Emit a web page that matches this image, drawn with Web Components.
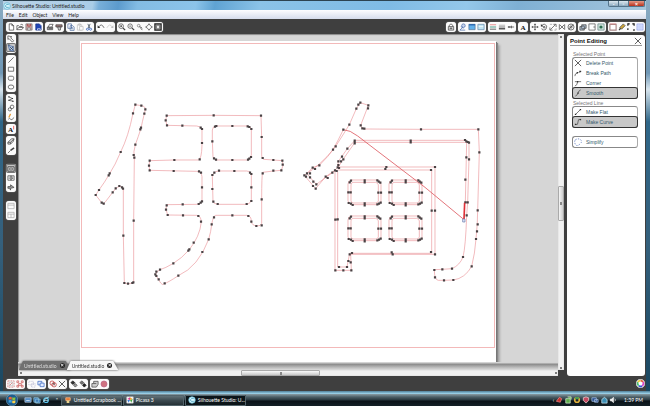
<!DOCTYPE html>
<html lang="en">
<head>
<meta charset="utf-8">
<title>Silhouette Studio: Untitled.studio</title>
<style>
html, body { margin: 0; height: 100%; }
body { font: 5px/6px Lato, "Liberation Sans", Arial, sans-serif; color: #222; overflow: hidden; }
</style>
</head>
<body>
<studio-app></studio-app>
<script>
const ICONS = {
  new: '<path class="w" d="M2.5 1h3l2 2v5h-5zM5.5 1v2h2"/>',
  open: '<path d="M1 7.500V3h2l1 1h3v1M1 7.500 3 5h5.500L6.500 7.500zM5 2q1.500-1.200 3 .5"/>',
  save: '<path fill="#c9a3a3" stroke="#777" d="M1 1h7v7H1z"/><path stroke="#a33" d="M3 1v2.500h3V1"/><path fill="#eee" stroke="#777" d="M3 5.500h3V8H3z"/>',
  saveblue: '<path fill="#2347b5" stroke="#16348c" d="M2 1h4l2 2v5H2z"/><path stroke="#fff" d="M4 6.500h3V8M4 6.500V8"/>',
  print: '<path fill="#aaa" d="M1.500 4.500h6v3h-6z"/><path class="w" d="M2.500 4.500 4 1.500h4L6.500 4.500z"/><path d="M3 6h4"/>',
  cutter: '<path fill="#977" d="M1 2h7v2.500H1z"/><path fill="#ccc" d="M3 4.500h3.500L6 8H4z"/>',
  copy: '<path class="w" stroke="#4b6a9c" d="M1 1h4v5H1zM3.500 3h3l1.500 1.500v3.800H3.500z"/><path stroke="#4b6a9c" d="M4.500 5h2M4.500 6.500h2.500"/>',
  paste: '<g opacity=".35"><path d="M1.500 2h5v6h-5zM3 1h2v1.500H3z"/><path class="w" d="M4 4h4v4H4z"/></g>',
  cut: '<path stroke="#345" d="M3.200 1 5.500 6M5.800 1 3.500 6"/><circle stroke="#2b5bb8" cx="2.800" cy="7" r="1.200"/><circle stroke="#2b5bb8" cx="6.300" cy="7" r="1.200"/>',
  undo: '<path d="M2 4.500Q5-.5 8 5.500"/><path class="k" d="M.7 2.500v3.200h3z"/>',
  redo: '<g opacity=".3"><path d="M7 4.500Q4-.5 1 5.500"/><path class="k" d="M8.300 2.500v3.200h-3z"/></g>',
  zoomin: '<circle cx="3.500" cy="3.500" r="2.600"/><circle class="k" cx="3.500" cy="3.500" r="1"/><path stroke-width="1.500" d="M5.500 5.500 8 8"/>',
  zoomout: '<circle cx="3.500" cy="3.500" r="2.500"/><path d="M2.500 3.500h2"/><path stroke-width="1.400" d="M5.500 5.500 8 8"/>',
  zoomsel: '<circle cx="3" cy="3" r="1.500" stroke="#777"/><path d="M4 4 7 8M5 4l2 2"/>',
  pan: '<path class="w" d="M4.500.8 6 3l2.300 1.500L6 6 4.500 8.200 3 6 .7 4.500 3 3z"/>',
  fit: '<path fill="#aaa" stroke="#222" stroke-width="1.400" d="M1 1h7v7H1z"/><path class="w" stroke="#555" d="M3 2.500h3v4H3z"/>',
  lock: '<path d="M2.500 4V2.500Q4.500-.5 6.500 2.500V4"/><path fill="#ddd" d="M1.500 4h6v4h-6z"/><path d="M4.500 5v2M3 6h3"/>',
  pen: '<circle cx="5" cy="3" r="2" fill="#c9d6ee" stroke="#4668a8"/><path stroke="#4668a8" d="M4 5 1 8h6M2 4l3 2"/>',
  fill: '<path fill="#62b1eb" stroke="#579" d="M1 1.500h7v6H1z"/><path stroke="#2b67ae" stroke-width="1.500" d="M1 2h7"/>',
  fillpat: '<path fill="#c2e5f2" stroke="#68a" d="M1 1.500h7v6H1z"/><path stroke="#fff" d="M2 4h5"/>',
  linecolor: '<path stroke="#d66" d="M1 2h7"/><path stroke="#6a9" stroke-width="1.300" d="M1 4.500h7"/><path stroke="#888" stroke-width="1.500" d="M1 7h7"/>',
  linestyle: '<path stroke="#999" d="M1 2.500h7"/><path d="M1 4.500h7"/><path stroke="#444" stroke-width="1.500" d="M1 6.500h7"/>',
  knife: '<path stroke-width="1.600" d="M1 4.500h3"/><path d="M4 4.500h4M5 3v3"/>',
  text: '<text x="4.500" y="7.500" text-anchor="middle">A</text>',
  move: '<path d="M4.500 1v7M1 4.500h7"/><path class="k" d="m4.500.5 1.200 1.500H3.300zM4.500 8.500 3.300 7h2.400zM.5 4.500 2 3.300v2.400zM8.500 4.500 7 3.300v2.400z"/>',
  rotate: '<path d="M2 3Q5-.5 7.500 3.500 7.500 8 4.500 8 2 8 2 6"/><path class="k" d="M1 1v3h3z"/><path d="M4 4h1.500v1.500H4z"/>',
  scale: '<path d="M1.500 7.500 7 2M1 5v3h3M5 1.500h3v3"/><path stroke="#999" d="M1 1.500h2.500M6 8h2V6"/>',
  align: '<path d="M1.500 1.500v6M7.500 1.500v6M2 2l2.500 2.500L2 7M7 2 4.500 4.500 7 7"/>',
  replicate: '<circle cx="4.500" cy="4.500" r="3.400"/><circle cx="4.500" cy="4.500" r="1.300"/><path d="m2 7 5-5"/>',
  weld: '<path fill="#abc" d="M1 4h2V2h5v4H6v2H1z"/><circle cx="4.500" cy="5" r="1.800"/>',
  offset: '<path class="w" stroke="#555" d="M1 1h7v7H1z"/><path d="M6 4.500h2"/>',
  trace: '<path fill="#cfe2da" stroke="#688" d="M1 1h7v7H1z"/><circle fill="#286b4e" stroke="none" cx="4.500" cy="4.500" r="1.800"/>',
  page: '<path class="w" stroke="#a88" stroke-width="1.300" d="M1 1.500h7v6.500H1z"/><path stroke="#d88" d="M1 1h7"/>',
  pencil: '<path fill="#cda63b" d="m2 5 4-4 2 2-4 4z"/><path stroke-width="1.500" d="M1.200 7.800 3 6"/>',
  reg: '<path stroke="#111" stroke-width="1.300" d="M1 3V1h2M6 1h2v2M1 6v2M8 7v1H7"/>',
  grid: '<path fill="#bcc8f6" stroke="#aab7ee" d="M1 1h7v7H1z"/><path stroke="#dbe1ff" d="M3.300 1v7M5.700 1v7M1 3.300h7M1 5.700h7"/>',
  select: '<path class="w" d="M1 1v4l1.300-1L6 8l1.500-1.500L4 3l1.500-1z"/>',
  edit: '<path fill="#c6d5ef" stroke="#345b9b" d="M1.500 1.500 7 3v5L3 7z"/><path stroke="#234" d="M1 1h2M3 3l4 4M7 3 3 7"/>',
  line: '<path d="M1.500 7.500 7.500 1.500"/>',
  rect: '<path d="M1.500 2.500h6v4.500h-6z"/>',
  round: '<rect x="1.500" y="2.500" width="6" height="4.500" rx="1.600"/>',
  oval: '<ellipse cx="4.500" cy="4.500" rx="3.200" ry="2.300"/>',
  poly: '<path d="M2 2l4 2-4 2 5 1"/><path class="k" d="M1.500 1.500h1.300v1.300H1.500zM5.500 3.300h1.300v1.300H5.500zM1.500 5.300h1.300v1.300H1.500zM6 6.500h1.300v1.300H6z"/>',
  curve: '<circle cx="5.700" cy="3.200" r="2"/><circle cx="3.200" cy="6" r="1.800"/>',
  free: '<path stroke="#e59a35" stroke-width="1.400" d="M4 1 2 5"/><path d="M1.500 7q1.500-2 2.500 0t4-2"/>',
  textred: '<text x="4" y="7.500" text-anchor="middle">A</text><path stroke="#e33" d="M7.500 1v4"/>',
  eraser: '<path fill="#ddd" d="M1 6 5 2l3 0-1 3-3 3H1z"/><path d="m1 6h3l3.500-3.500M4 6v2"/>',
  knife2: '<path stroke-width="1.700" d="M4 5 8 2"/><path d="M1 8 4 5"/>',
  fitpage: '<path fill="#ddd" stroke="#222" d="M1 2h7v5H1z"/><path class="w" d="M3 3.500h3v2H3z"/>',
  book: '<path class="w" d="M1 2h3.500v5H1zM4.500 2H8v5H4.500z"/><path d="M2 3.500h1M5.500 3.500h1.500M2 5h1M5.500 5h1.500"/>',
  send: '<path fill="#999" d="M1 4h3V2l4 3-4 1v2L3 6H1z"/>',
  panes: '<path stroke="#aaa" d="M1 1.500h7v6H1zM1 3.500h7"/>',
  split: '<path stroke="#aaa" d="M1 1.500h7v6H1zM4.500 3.500v4M1 3.500h7"/>',
  group: '<g stroke="#c66"><path d="M2.500 2.500h4v4h-4z" stroke="#bbb"/><path stroke-dasharray="2 1" d="M1 1h7v7H1z"/><path d="m3 6 3-3"/></g>',
  ungroup: '<g stroke="#c55"><path d="M1 1h2v2H1zM6 1h2v2H6zM1 6h2v2H1zM6 6h2v2H6z"/><path d="M3 4h3v2H3z"/></g>',
  compound: '<g stroke="#aac"><path d="M1 1.500h5v4H1zM4 4h4v4H4z" stroke-dasharray="1 1"/></g>',
  release: '<g stroke="#3867bf" fill="#e2ebff"><path d="M1 1.500h4.500v4H1z"/><path d="M3.500 3.500H8v4H3.500z"/></g>',
  dup: '<g stroke="#b33" fill="none"><circle cx="3.500" cy="3.500" r="2.400"/><circle cx="5.700" cy="5.300" r="2.500"/></g><path d="M4 4h2v2"/>',
  del: '<path stroke="#222" d="m1 1 7 7M8 1 1 8"/>',
  front: '<path fill="#333" stroke="#111" d="m1 3 2-2 2.500 2-2 2z"/><path fill="#999" d="m4 6 2-2 2 2-2 2z"/>',
  back: '<path fill="#777" d="m1 3 2-2 2.500 2-2 2z"/><path fill="#222" stroke="#111" d="m4 6 2-2 2 2-2 2z"/>',
  weld2: '<path fill="#ccc" d="M1 8V4h2V1.500h5V5L6 8z"/><path d="M3 4h3"/>',
  dot: '<circle cx="4.500" cy="4.500" r="3.400" fill="#cf7280" stroke="#b68"/>',
  ptbreak: '<path d="M1 8q0-3 2.500-3.500M5 4l3-1"/><path class="k" d="M3 3.500h1.500V5H3zM6 2h2v1.500H6z"/>',
  ptcorner: '<path d="M1 8q3-1 3-5h4M1 3h3"/><path class="k" d="M3.300 2.300h1.500v1.500H3.300z"/>',
  ptsmooth: '<path d="M1.500 8Q4 7 4.500 4.500T7.500 1"/><path class="k" d="M3.800 3.800h1.500v1.500H3.800z"/>',
  ptflat: '<path d="M1.500 7.500 7.500 1.500"/><path class="k" d="M1 6.500h1.500V8H1zM6.500 1H8v1.500H6.500z"/>',
  ptcurve: '<path d="M1.500 7.500Q5 8 4.500 4.500T7.500 1.500"/><path class="k" d="M1 6.500h1.500V8H1zM6.500 1H8v1.500H6.500z"/>',
  simplify: '<path stroke="#4668b8" stroke-dasharray="1.500 1.500" d="M1.500 2Q5 0 7.500 2t-1 5-5 0 0-5"/>',
  wheel: '<circle cx="4.500" cy="4.500" r="4.300" fill="#fff" stroke="#ccc"/><g stroke-width="1.700"><path stroke="#e25b42" d="M4.500 1.700A2.800 2.800 0 0 1 7 3.200"/><path stroke="#d845c6" d="M7 3.200A2.800 2.800 0 0 1 6 6.900"/><path stroke="#3656d8" d="M6 6.900A2.800 2.800 0 0 1 2.700 6.600"/><path stroke="#48bd74" d="M2.700 6.600A2.800 2.800 0 0 1 2 3.200"/><path stroke="#e8cb37" d="M2 3.200A2.800 2.800 0 0 1 4.500 1.700"/></g>',
  logo: '<circle cx="4.500" cy="4.500" r="3.700" fill="#d9f5fb" stroke="#56b6d4"/><path stroke="#2e93b8" d="M6.500 3Q4 1.500 3 4t3.500 2"/>',
  orb: '<circle cx="4.500" cy="4.500" r="4.400" fill="#1d5c8e" stroke="#9bc4da" stroke-width=".3"/><path fill="#e8663a" stroke="none" d="M2 2.500Q3.200 1.700 4.300 2.400V4.300Q3 3.700 2 4.300z"/><path fill="#8dc63f" stroke="none" d="M4.700 2.500Q6 3 7 2.400V4.200Q6 4.900 4.700 4.400z"/><path fill="#3fa0e0" stroke="none" d="M2 4.700Q3 4.200 4.300 4.700V6.600Q3 6 2 6.600z"/><path fill="#fbd24b" stroke="none" d="M4.700 4.800Q6 5.300 7 4.700V6.500Q6 7.200 4.700 6.700z"/>',
  desk: '<path fill="#4f8bc5" stroke="#bcd" d="M1 2h7v5H1z"/><path stroke="#fff" d="M2.500 5h4"/>',
  flip: '<path fill="#3272b5" stroke="#9cd" d="M1 2h5v5H1zM3 3.500h5V8H3z"/>',
  ie: '<circle cx="4.500" cy="4.700" r="2.600" stroke="#5cc8f2" stroke-width="1.300"/><path stroke="#c8eef9" d="M2 5h5M1 7.500Q3 2 8 1"/>',
  scrap: '<path fill="#e77b31" stroke="#fb8" d="M2 2h5v3H2z"/><path fill="#ead38d" stroke="none" d="M3 5h3v3H3z"/>',
  picasa: '<path fill="#fff" stroke="#ddd" d="M1 1h7v7H1z"/><path fill="#d43b8b" stroke="none" d="M4.500 1.500v3l-3-1z"/><path fill="#49a942" stroke="none" d="M7.500 3.500l-3 1 1.500 3z"/><path fill="#3b7dd8" stroke="none" d="M3 7.500l1.500-3h-3z"/><path fill="#f4a12b" stroke="none" d="M4.500 1.500l3 2-3 1z"/>',
  t1: '<path fill="#c9302c" stroke="#e88" d="M1.500 6 5 1.500 7.500 3 6 7z"/>',
  t2: '<path fill="#5fae4e" stroke="#d9efd2" d="M2 3h5v5H2zM4 1h4v3"/>',
  t3: '<circle cx="4.500" cy="4.500" r="2.600" stroke="#e2b23c" stroke-width="1.800"/><path stroke="#3b9b53" stroke-width="1.800" d="M2.500 3Q4.500 1 6.500 3"/>',
  t4: '<path fill="#c64a62" stroke="#edd" d="M1.500 2 4.500 1l3 1v3l-3 3-3-3z"/>',
  t5: '<path fill="#2a4f8e" stroke="#a9c2e4" d="M1 2h5v4H1zM4 4h4v3H4z"/>',
  t6: '<path fill="#3c8fb5" stroke="#cdeaf4" d="M2 4l3-2.500 3 2.500v4H2z"/>',
  t7: '<path fill="#eee" stroke="#eee" d="M1.500 3.500H3L5 1.500v6L3 5.500H1.500z"/><path stroke="#eee" d="M6.500 3q1.500 1.500 0 3"/>'
};

function define(name, css, html) {
  customElements.define(name, class extends HTMLElement {
    connectedCallback() {
      if (this.shadowRoot) return;
      const root = this.attachShadow({ mode: 'open' });
      root.innerHTML = `<style>*{box-sizing:border-box}button{font:inherit;color:inherit;border:0;padding:0;margin:0;background:none}${css}</style>${typeof html === 'function' ? html(this) : html}`;
    }
  });
}

define('tool-icon', `
  :host{display:block;width:8px;height:8px;flex:none}
  svg{display:block;width:100%;height:100%;fill:none;stroke:#444;stroke-width:.8}
  .w{fill:#fff}.k{fill:#333;stroke:none}
  text{font:bold 8px "Liberation Serif",serif;fill:#111;stroke:none}`,
  el => `<svg viewBox="0 0 9 9" aria-hidden="true">${ICONS[el.getAttribute('name')]}</svg>`);

define('tool-group', `
  :host{display:flex;flex:none;background:#fbfbfb;border-radius:3px;padding:0 1px 0 0;height:10px;box-shadow:0 0 1px #ddd}
  :host([vertical]){flex-direction:column;height:auto;width:10px;padding:0 0 1px}
  :host([apart]){margin-top:7px}
  button{display:flex;align-items:center;justify-content:center;width:9px;height:10px}
  :host([vertical]) button{width:10px;height:9px}
  button[aria-pressed=true]{background:#c6c6c6;border-radius:2px;box-shadow:inset 0 0 0 1px #777}`,
  el => el.getAttribute('icons').split(' ').map(n =>
    `<button aria-label="${n}" aria-pressed="${n === el.getAttribute('selected')}"><tool-icon name="${n}"></tool-icon></button>`).join(''));

define('title-bar', `
  :host{display:flex;align-items:center;height:10px;padding:0 1px 0 0;gap:1px;border-top:1px solid #2c4351;
    background:linear-gradient(100deg,#b9d2e6 0,#a9cde7 14%,#78afd9 15%,#5c9bcd 18%,#83bce3 21%,#8cc4ea 30%,#5fa3d3 33%,#8bc3e8 40%,#7fbbe5 60%,#94c8ea 72%,#7eb0d4 80%,#a6c6dc 100%)}
  h1{font:inherit;margin:0;flex:1}
  .c{display:flex;align-self:flex-start;border:1px solid #54748a;border-top:0;border-radius:0 0 2px 2px;overflow:hidden}
  .c button{width:10px;height:5px;font:bold 5px/4px "Liberation Sans",sans-serif;color:#fff;background:linear-gradient(#dce8f0,#8ba9be);border-right:1px solid #54748a}
  .c .x{width:15px;border:0;background:linear-gradient(#e49a88,#b9301b)}`,
  `<tool-icon name="logo"></tool-icon><h1>Silhouette Studio: Untitled.studio</h1>
  <div class="c"><button aria-label="Minimize">-</button><button aria-label="Restore">▫</button><button class="x" aria-label="Close">×</button></div>`);

define('menu-bar', `
  :host{display:flex;align-items:center;height:9px;padding:0 3px;gap:5px;background:linear-gradient(#fdfdff,#d5dcec)}`,
  ['File', 'Edit', 'Object', 'View', 'Help'].map(t => `<button>${t}</button>`).join(''));

define('tool-bar', `
  :host{display:flex;justify-content:space-between;align-items:center;height:15px;padding:0 1px 0 3px;background:#3f3f3f}
  div{display:flex;gap:2px}`,
  `<div><tool-group icons="new open save saveblue"></tool-group><tool-group icons="print cutter"></tool-group><tool-group icons="copy paste cut"></tool-group><tool-group icons="undo redo"></tool-group><tool-group icons="zoomin zoomout zoomsel pan fit"></tool-group></div>
  <div><tool-group icons="lock"></tool-group><tool-group icons="pen fill fillpat"></tool-group><tool-group icons="linecolor linestyle knife"></tool-group><tool-group icons="text"></tool-group><tool-group icons="move rotate scale align replicate"></tool-group><tool-group icons="weld offset trace"></tool-group><tool-group icons="page pencil reg grid"></tool-group></div>`);

define('side-tools', `
  :host{display:flex;flex-direction:column;gap:2px;width:15px;padding:0 2px 0 3px;flex:none}`,
  `<tool-group vertical icons="select edit" selected="edit"></tool-group><tool-group vertical icons="line rect round oval"></tool-group><tool-group vertical icons="poly curve free"></tool-group><tool-group vertical icons="textred"></tool-group><tool-group vertical icons="eraser knife2"></tool-group><tool-group vertical apart icons="fitpage book send" selected="fitpage"></tool-group><tool-group vertical apart icons="panes split"></tool-group>`);

/* Outlines and edit points; each glyph is drawn at three units to the pixel. */
const LEFT = `M151 29L169 32Q182 34 181 44L178 56Q172 80 168 100 160 125 151 149 144 172 148 188L146 377V562Q140 566 129 566L118 564 115 422V281Q106 268 92 281L83 292 60 322Q56 330 50 323L32 300 42 285Q60 260 71 241 92 208 107 171 130 125 144 55Z
M245 62L386 61 528 62 530 126V180Q530 193 536 193L565 195 592 197Q598 210 589 226L565 228 533 232Q530 240 530 313V385Q528 394 514 393 500 390 499 380 499 361 485 361H392Q385 361 380 388 378 410 371 433 340 515 280 542 250 562 238 566 232 572 227 564L212 540Q212 530 225 524 240 520 265 505 290 490 311 466 345 425 349 380 347 361 335 361L248 360 243 343 245 329 335 328Q351 325 351 315V245Q349 229 335 229L194 226 192 212 194 197 268 195H340Q350 193 351 150V105Q348 93 335 93L246 91 242 76Z
M392 93H488Q499 95 499 105V180Q495 195 485 195H395Q384 193 384 185L382 139V105Q384 93 392 93ZM400 228H485Q499 230 499 240V315Q495 328 485 328H398Q384 326 384 318L382 245Q384 230 400 228Z`;
const LEFT_PTS = '151,29 169,32 181,43 178,56 144,55 168,98 166,103 151,149 107,171 146,180 148,188 74,235 71,241 42,285 32,300 50,323 56,326 83,292 92,280 103,273 111,277 114,281 146,377 115,422 118,564 129,566 142,564 145,562 ' +
'245,62 242,76 246,91 386,61 528,62 292,92 347,98 351,102 351,144 344,193 268,195 194,197 192,212 194,226 266,228 342,229 348,233 351,277 351,319 347,323 341,327 293,328 245,331 243,344 248,360 294,361 340,363 348,380 326,443 313,463 310,467 265,505 225,524 214,530 211,538 214,543 221,553 239,565 280,542 352,471 371,433 380,388 387,367 442,361 490,363 499,380 514,393 530,391 530,313 533,235 565,227 589,226 593,209 592,197 565,195 533,189 530,126 ' +
'390,95 394,93 442,93 488,94 493,96 499,102 382,139 387,190 393,194 442,195 489,194 493,191 498,186 382,240 388,233 402,227 448,228 495,233 499,237 382,282 385,320 398,327 499,277 499,318 485,327';
const RIGHT = `M196 38L220 46 197 106Q198 116 208 117L378 118H550L553 187 548 361Q548 400 543 447 540 490 530 529 510 565 475 570L447 571H430Q418 570 418 539L442 538 471 536Q495 525 504 501 512 470 515 376L518 337 522 208V158L510 151H180L157 176 130 214 128 232 112 248 64 283 45 262 36 250 53 233 73 226Q100 200 122 169L150 125 163 104 184 56Z
M145 119Q130 150 114 179 80 222 28 256L62 296 92 260 120 241V541H169L167 493H420V231H130L145 207 180 157H515L511 337
M128 245V531H156L164 490H410V240H128`;
const RIGHT_PTS = '196,38 190,44 184,56 220,46 219,55 163,104 197,106 202,115 208,116 145,119 378,118 550,118 553,187 179,152 179,156 179,160 347,152 347,157 510,150 514,154 518,156 522,158 122,169 114,179 157,176 141,200 145,208 130,214 138,214 130,225 128,232 132,234 73,226 53,233 60,237 36,250 45,250 28,256 33,260 45,262 55,275 64,283 54,288 62,296 92,260 98,264 112,248 120,241 125,243 274,231 271,237 420,231 408,240 410,362 420,362 514,202 522,208 511,269 511,337 518,337 515,376 548,361 548,403 546,424 543,447 504,501 530,529 471,536 442,538 418,540 420,562 447,571 475,570 121,389 128,388 171,489 164,493 290,487 293,493 408,486 420,493 160,513 167,517 156,531 132,531 121,541 145,541 169,541';
const windowsPath = [[160, 270], [283, 270], [160, 378], [283, 378]].map(([x, y]) =>
  `M${x + 10} ${y}h76q12 2 12 14v50q-2 10-12 10h-76q-11-2-11-12v-50q1-12 11-12zM${x + 14} ${y + 7}h68q8 2 8 8v48q-2 6-8 6h-68q-6-1-6-7v-47q0-7 6-8z`).join('');
const windowsPts = [[160, 270], [283, 270], [160, 378], [283, 378]].map(([x, y]) =>
  [[0,37],[7,37],[8,2],[4,7],[49,1],[49,7],[87,1],[91,5],[96,8],[90,38],[98,38],[1,69],[8,71],[13,75],[49,70],[49,76],[87,73],[92,71],[97,68]].map(p => (x + p[0]) + ',' + (y + p[1])).join(' ')).join(' ');
const dots = s => s.split(' ').map(p => 'M' + p + 'h.1').join('');

define('design-page', `
  :host{display:block;flex:1;background:#fff;box-shadow:1px 1px 0 #777,2px 2px 1px #888,4px 4px 2px #aaa}
  svg{display:block;width:100%;height:100%}
  .o{fill:none;stroke:#e98d92;stroke-width:1.8}
  .p{fill:none;stroke:#494244;stroke-width:6.500;stroke-linecap:square}`,
  `<svg viewBox="80 41 416 321" role="img" aria-label="Character outline with edit points">
   <rect x="81.500" y="43.500" width="413" height="304" fill="none" stroke="#f3b9b9"/>
   <g transform="translate(85 95) scale(.33333)"><path class="o" d="${LEFT}"/><path class="p" d="${dots(LEFT_PTS)}"/></g>
   <g transform="translate(295 90) scale(.33333)"><path class="o" d="${RIGHT}${windowsPath}"/><path class="o" style="stroke:#dd5960;stroke-width:2.500" d="M145 119Q165 120 188 138L390 292 506 388"/><path class="p" d="${dots(RIGHT_PTS + ' ' + windowsPts)}"/><path d="M509 338 507 388" stroke="#df3038" stroke-width="5"/><path d="M503 387h7v9h-7z" fill="#dde8ff" stroke="#6675a5" stroke-width="2"/></g></svg>`);

define('scroll-bar', `
  :host{display:flex;flex-direction:column;align-items:center;justify-content:space-between;background:#f1f1f1;box-shadow:inset 0 0 1px #999}
  :host([horizontal]){flex-direction:row}
  .track{flex:1;display:flex;flex-direction:column;align-self:stretch}
  :host([horizontal]) .track{flex-direction:row}
  .track::before{content:"";flex:147}
  .track::after{content:"";flex:144}
  :host([horizontal]) .track::before{flex:219}
  :host([horizontal]) .track::after{flex:234}
  .thumb{flex:32;display:flex;align-items:center;justify-content:center;background:linear-gradient(90deg,#f6f6f6,#ccc);border:1px solid #aaa;border-radius:1px}
  :host([horizontal]) .thumb{flex:77;background:linear-gradient(#fafafa,#c8c8c8)}
  .thumb::after{content:"";width:2px;height:3px;background:#888}
  button{width:5px;height:5px;display:flex;align-items:center;justify-content:center}
  i{width:2px;height:2px;background:#555;border-radius:1px}`,
  `<button aria-label="Scroll back"><i></i></button><div class="track"><div class="thumb"></div></div><button aria-label="Scroll forward"><i></i></button>`);

define('document-tab', `
  :host{display:block;height:9px;margin-right:-4px;filter:drop-shadow(0 0 1px #555)}
  :host([active]){z-index:1}
  div{display:flex;align-items:center;gap:3px;height:9px;padding:0 6px 0 5px;background:#707070;color:#ddd;clip-path:polygon(4px 0,calc(100% - 5px) 0,100% 100%,0 100%)}
  :host([active]) div{background:#f7f7f7;color:#333}
  button{display:flex;align-items:center;justify-content:center;width:5px;height:5px;border-radius:3px;background:#222;color:#fff;font:bold 5px/5px "Liberation Sans",sans-serif}`,
  `<div><slot></slot><button aria-label="Close tab">×</button></div>`);

define('work-area', `
  :host{display:grid;grid-template:1fr 8px 6px/1fr 6px;flex:1;min-width:0;background:#d6d6d6}
  .view{display:flex;padding:7px 62px 0;overflow:hidden;box-shadow:inset 1px 1px 1px #888}
  .v{grid-row:1/3;grid-column:2}
  .tabs{display:flex;align-items:flex-end;padding-left:1px;background:linear-gradient(#d4d4d4 0 1px,#888 2px,#b5b5b5 5px,#ddd)}
  .corner{background:#3f3f3f}`,
  `<div class="view"><design-page></design-page></div><scroll-bar class="v"></scroll-bar>
  <div class="tabs"><document-tab>Untitled.studio</document-tab><document-tab active>Untitled.studio</document-tab></div>
  <scroll-bar horizontal></scroll-bar><div class="corner"></div>`);

define('option-list', `
  :host{display:flex;flex-direction:column;border:1px solid #888;border-right-color:#aaa;border-radius:3px;background:#fff}`,
  `<slot></slot>`);

define('panel-option', `
  :host{display:block}
  button{display:flex;align-items:center;gap:4px;width:100%;height:10px;padding-left:1px;color:#34596a}
  :host([selected]) button{background:#c8c8c8;border-radius:2px;box-shadow:0 0 0 1px #333}`,
  el => `<button aria-pressed="${el.hasAttribute('selected')}"><tool-icon name="${el.getAttribute('icon')}"></tool-icon><slot></slot></button>`);

define('point-panel', `
  :host{display:block;flex:none;width:78px;margin:1px 1px 0 3px;padding:1px 3px;background:#fff;border-radius:3px}
  header{display:flex;justify-content:space-between;align-items:center;height:10px;border-bottom:1px solid #999}
  h2{margin:0;font:bold 6px/8px "Liberation Sans",sans-serif;color:#111}
  h3{margin:0 0 0 3px;font:inherit;color:#777}
  header button{width:8px;height:8px}
  .a{margin-top:5px}
  .b{margin-top:1px}
  option-list,h3{font-family:"Liberation Sans",sans-serif}
  option-list{margin:0 4px 0 2px}
  option-list.last{margin-top:8px}`,
  `<header><h2>Point Editing</h2><button aria-label="Close panel"><tool-icon name="del"></tool-icon></button></header>
  <h3 class="a">Selected Point</h3>
  <option-list><panel-option icon="del">Delete Point</panel-option><panel-option icon="ptbreak">Break Path</panel-option><panel-option icon="ptcorner">Corner</panel-option><panel-option icon="ptsmooth" selected>Smooth</panel-option></option-list>
  <h3 class="b">Selected Line</h3>
  <option-list><panel-option icon="ptflat">Make Flat</panel-option><panel-option icon="ptcurve" selected>Make Curve</panel-option></option-list>
  <option-list class="last"><panel-option icon="simplify">Simplify</panel-option></option-list>`);

define('bottom-bar', `
  :host{display:flex;justify-content:space-between;align-items:center;height:15px;padding:0 1px 0 3px;background:#3f3f3f}
  div{display:flex;gap:2px}
  button,button tool-icon{width:9px;height:9px}`,
  `<div><tool-group icons="group ungroup"></tool-group><tool-group icons="compound release"></tool-group><tool-group icons="dup del"></tool-group><tool-group icons="front back"></tool-group><tool-group icons="weld2 dot"></tool-group></div><button aria-label="Color wheel"><tool-icon name="wheel"></tool-icon></button>`);

define('task-button', `
  :host{display:block;flex:none;width:61px}
  button{display:flex;align-items:center;gap:2px;width:100%;height:11px;padding-left:3px;color:#fff;white-space:nowrap;overflow:hidden;border-radius:1px;background:linear-gradient(#6b7b81,#3c4a50 50%,#202b30);box-shadow:inset 0 0 0 1px #53646b}
  :host([active]) button{background:#0c1519}`,
  el => `<button><tool-icon name="${el.getAttribute('icon')}"></tool-icon><slot></slot></button>`);

define('task-bar', `
  :host{display:flex;align-items:center;height:12px;padding:0 7px 0 6px;color:#fff;background:linear-gradient(#8a9da5 0,#4c5f67 3px,#27363d 6px,#0a1217 7px,#142127)}
  .orb,.orb tool-icon{width:12px;height:12px}
  .q{display:flex;gap:1px;margin:0 6px}
  .tasks{display:flex;gap:1px;flex:1;min-width:0}
  .more{margin-right:3px}
  .tray{display:flex;align-items:center;gap:1px}
  time{margin-left:6px}`,
  `<button class="orb" aria-label="Start"><tool-icon name="orb"></tool-icon></button>
  <div class="q"><tool-icon name="desk"></tool-icon><tool-icon name="flip"></tool-icon><tool-icon name="ie"></tool-icon></div><span class="more">"</span>
  <div class="tasks"><task-button icon="scrap">Untitled Scrapbook ...</task-button><task-button icon="picasa">Picasa 3</task-button><task-button icon="logo" active>Silhouette Studio: U...</task-button></div>
  <div class="tray"><span>‹</span>${[1,2,3,4,5,6,7].map(n => `<tool-icon name="t${n}"></tool-icon>`).join('')}<time>1:39 PM</time></div>`);

define('studio-app', `
  :host{display:flex;flex-direction:column;height:100vh;background:linear-gradient(#89abc3,#6f97b5 18%,#d8e5ee 22%,#2f6688 30%,#35607c 60%,#17455e)}
  .win{flex:1;min-height:0;display:flex;flex-direction:column;margin:0 4px 0 3px}
  .main{flex:1;min-height:0;display:flex;background:#3f3f3f}
  .edge{height:3px;background:linear-gradient(#4e7e98,#a5dcf3)}`,
  `<div class="win"><title-bar></title-bar><menu-bar></menu-bar><tool-bar></tool-bar>
  <div class="main"><side-tools></side-tools><work-area></work-area><point-panel></point-panel></div>
  <bottom-bar></bottom-bar></div><div class="edge"></div><task-bar></task-bar>`);
</script>
</body>
</html>
